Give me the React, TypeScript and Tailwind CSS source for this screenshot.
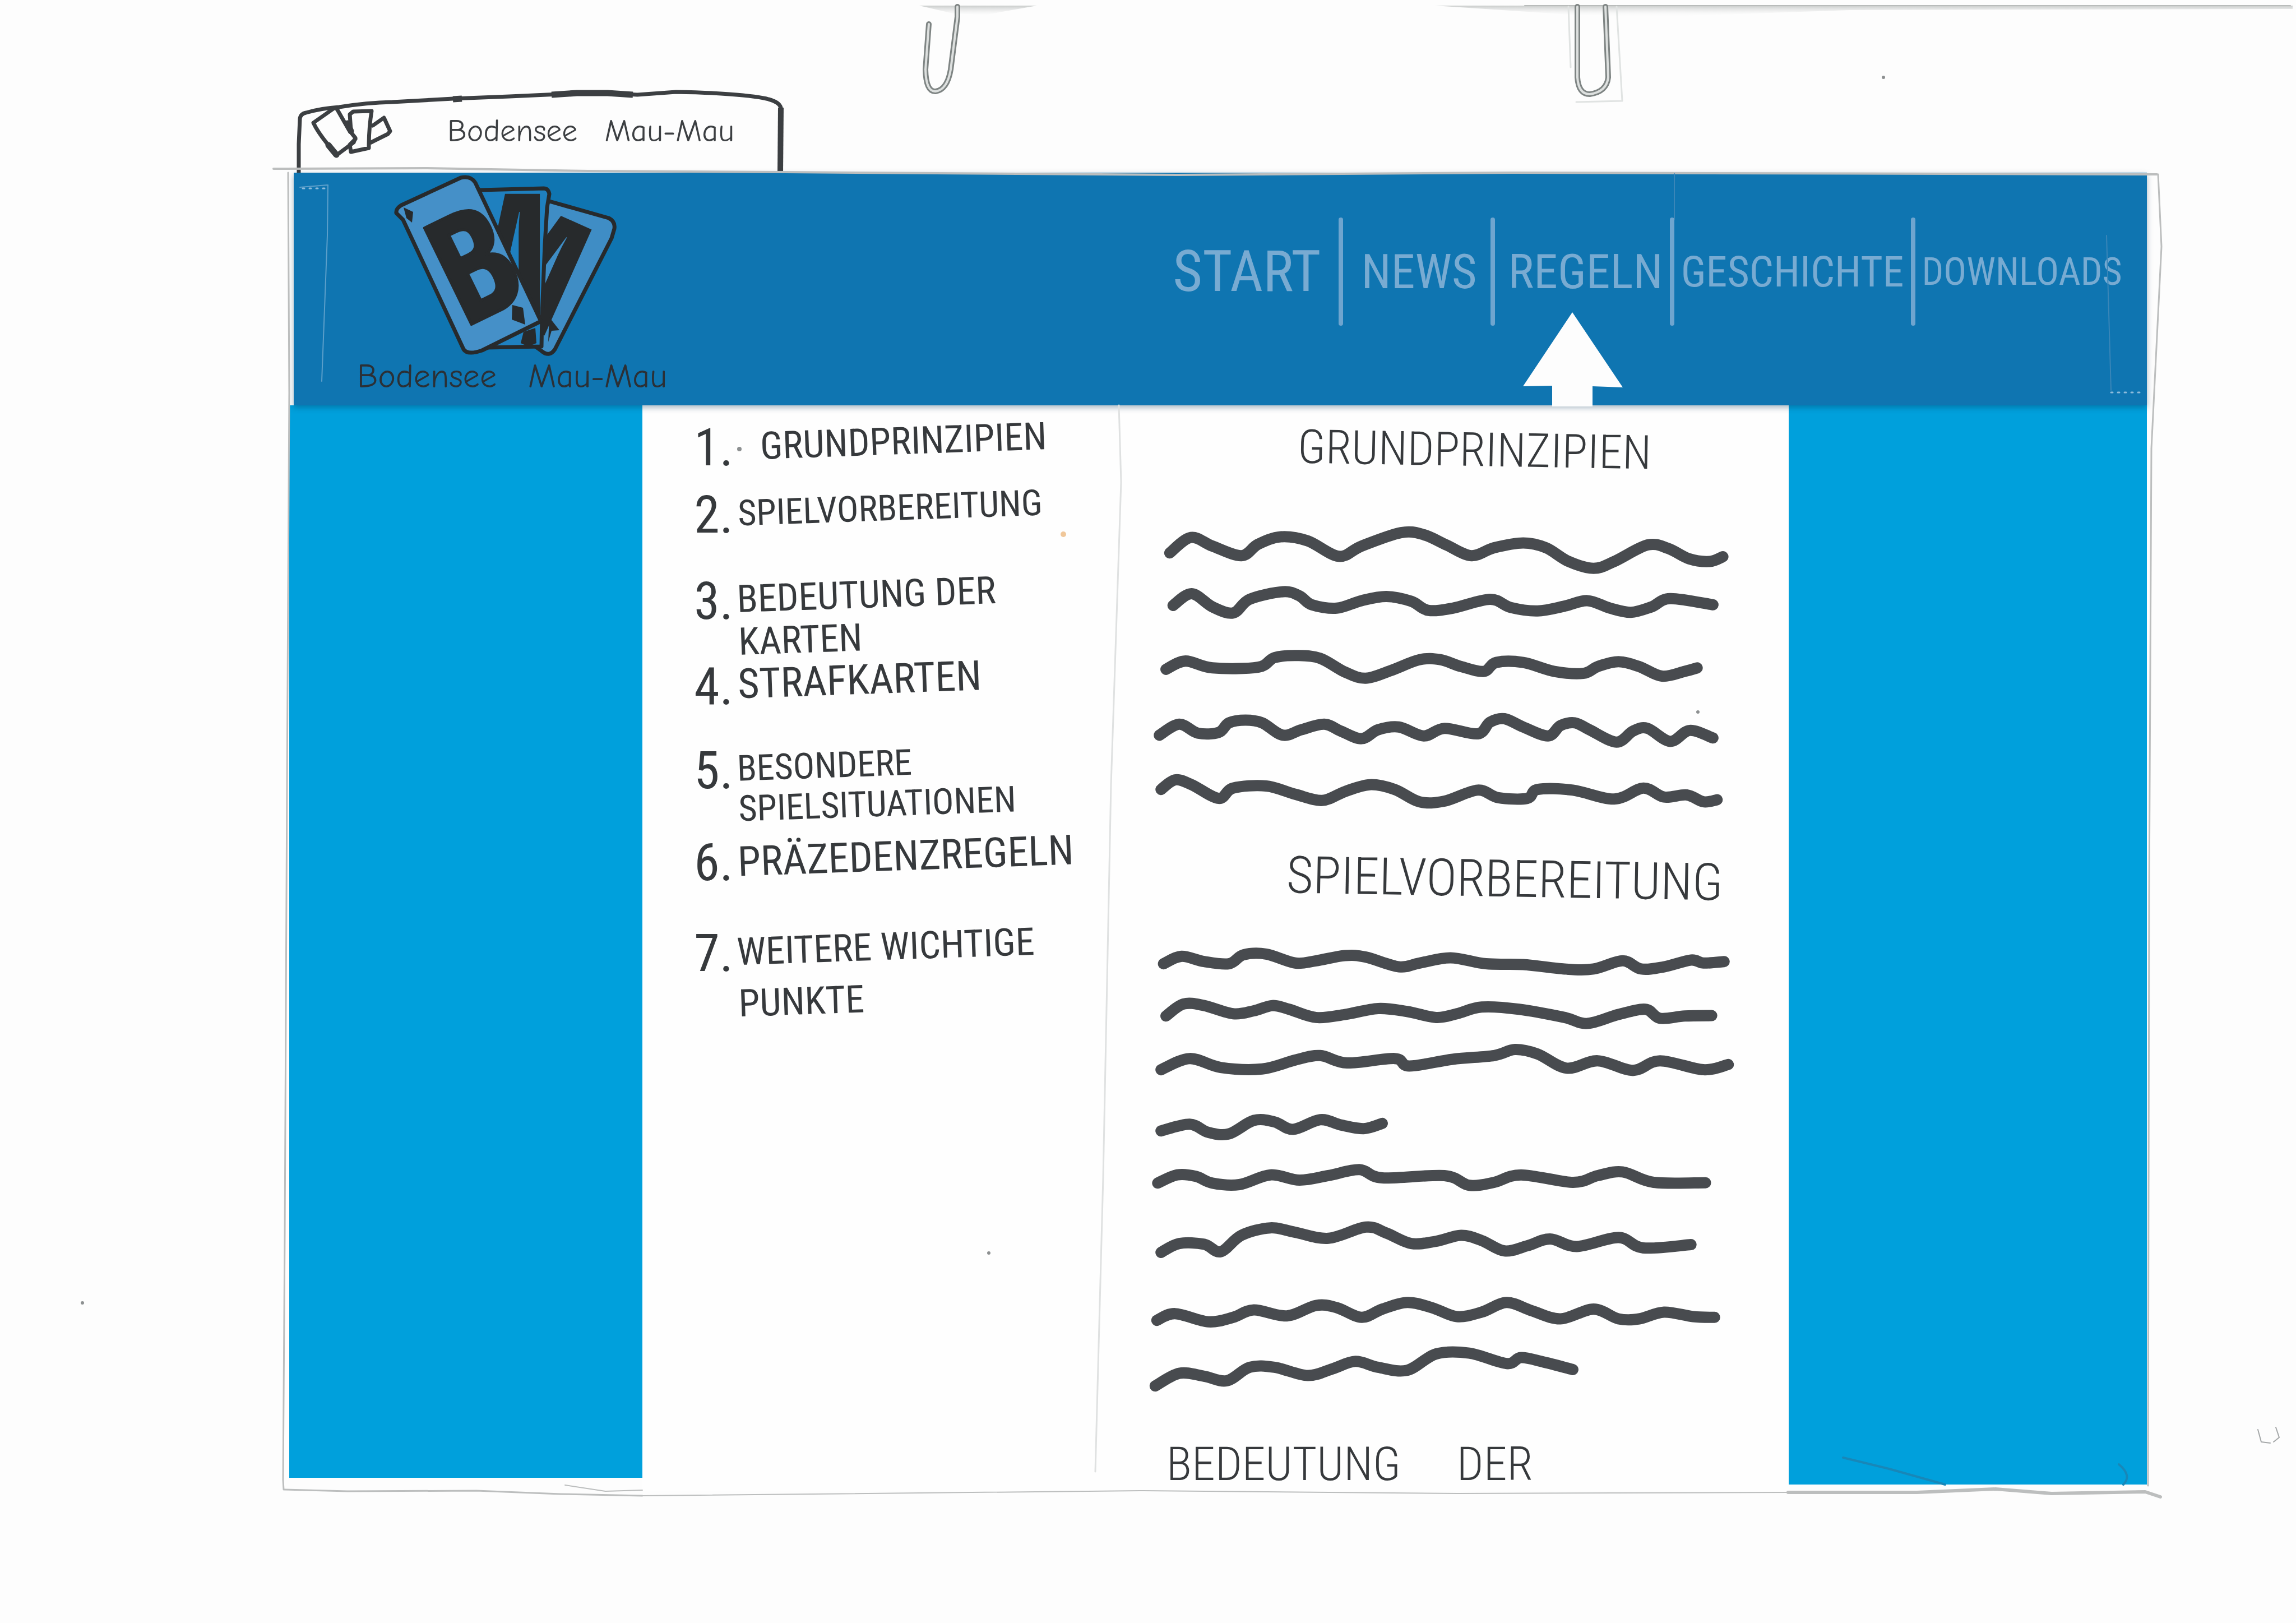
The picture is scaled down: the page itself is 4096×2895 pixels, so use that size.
import type { ReactNode } from 'react';

type Point = [number, number];

/* Smooth pen stroke through a list of points */
function stroke(points: Point[], sx: number, sy: number, ox: number, oy: number): string {
  const p = points.map(([x, y]): Point => [x * sx + ox, y * sy + oy]);
  let d = `M${p[0][0].toFixed(1)} ${p[0][1].toFixed(1)}`;
  for (let i = 0; i < p.length - 1; i++) {
    const a = p[Math.max(0, i - 1)];
    const b = p[i];
    const c = p[i + 1];
    const e = p[Math.min(p.length - 1, i + 2)];
    const c1 = [b[0] + (c[0] - a[0]) / 6, b[1] + (c[1] - a[1]) / 6];
    const c2 = [c[0] - (e[0] - b[0]) / 6, c[1] - (e[1] - b[1]) / 6];
    d += `C${c1[0].toFixed(1)} ${c1[1].toFixed(1)} ${c2[0].toFixed(1)} ${c2[1].toFixed(1)} ${c[0].toFixed(1)} ${c[1].toFixed(1)}`;
  }
  return d;
}

const basics: Point[][] = [
  [[97,455],[148,410],[200,435],[270,463],[310,430],[365,408],[430,420],[505,465],[560,435],[655,396],[710,402],[765,432],[825,463],[880,440],[950,426],[1005,440],[1060,480],[1120,500],[1170,480],[1250,432],[1300,442],[1350,472],[1400,480],[1432,466]],
  [[105,608],[150,574],[200,612],[250,630],[290,590],[370,568],[410,580],[440,606],[500,616],[560,594],[620,582],[680,596],[720,622],[780,616],[870,590],[920,614],[985,624],[1050,610],[1105,594],[1160,616],[1210,628],[1260,612],[1305,588],[1408,606]],
  [[88,794],[135,770],[200,790],[310,788],[350,760],[405,754],[460,762],[520,802],[570,820],[630,798],[700,766],[750,766],[800,786],[855,800],[885,774],[950,774],[1025,800],[1095,806],[1130,786],[1180,772],[1230,786],[1285,814],[1340,800],[1370,790]],
  [[72,986],[120,954],[165,980],[215,978],[240,950],[280,942],[320,950],[370,986],[415,970],[470,954],[510,974],[560,996],[600,970],[650,962],[710,988],[760,966],[840,982],[870,948],[905,938],[950,962],[1010,988],[1040,958],[1075,950],[1110,970],[1175,1006],[1215,974],[1250,966],[1305,1004],[1352,972],[1408,994]],
  [[76,1144],[110,1116],[150,1130],[215,1170],[250,1140],[330,1134],[400,1158],[465,1176],[520,1150],[580,1130],[640,1144],[700,1180],[760,1178],[840,1146],[890,1168],[960,1170],[985,1144],[1070,1146],[1170,1172],[1240,1140],[1290,1166],[1345,1160],[1385,1180],[1418,1174]],
];

const preparation: Point[][] = [
  [[82,104],[125,84],[180,98],[240,104],[275,80],[330,78],[400,102],[450,96],[520,82],[570,86],[650,112],[700,102],[775,88],[860,104],[950,106],[1050,118],[1120,118],[1190,96],[1235,118],[1290,112],[1355,94],[1385,102],[1435,98]],
  [[88,244],[130,212],[180,216],[250,238],[300,230],[345,216],[385,226],[450,248],[520,240],[600,224],[670,232],[740,248],[790,238],[850,220],[940,226],[1050,248],[1105,264],[1180,240],[1245,226],[1280,250],[1340,244],[1405,243]],
  [[76,388],[145,358],[220,382],[320,386],[400,362],[460,350],[525,370],[640,358],[675,378],[780,360],[880,350],[930,334],[985,346],[1055,384],[1130,364],[1215,390],[1280,364],[1385,388],[1445,374]],
  [[76,552],[145,534],[190,556],[240,560],[300,524],[350,528],[395,548],[460,522],[510,536],[565,546],[610,532]],
  [[68,692],[115,670],[160,674],[200,692],[265,696],[340,670],[410,684],[480,672],[555,656],[610,678],[760,672],[820,698],[880,690],[945,670],[1070,690],[1130,672],[1190,662],[1265,690],[1390,691]],
  [[76,878],[120,854],[180,856],[220,876],[270,832],[340,812],[400,824],[480,840],[570,810],[620,826],[680,854],[740,848],[800,832],[850,846],[905,874],[960,860],[1015,842],[1080,862],[1180,838],[1240,866],[1355,857]],
  [[66,1060],[110,1042],[190,1064],[250,1052],[300,1032],[380,1048],[450,1020],[500,1026],[560,1052],[610,1030],[670,1012],[730,1026],[790,1050],[850,1038],[910,1012],[970,1034],[1040,1056],[1120,1030],[1180,1056],[1230,1056],[1290,1038],[1360,1050],[1412,1052]],
  [[62,1236],[120,1202],[180,1210],[235,1222],[290,1186],[350,1186],[430,1208],[490,1190],[545,1170],[600,1186],[670,1194],[740,1150],[820,1148],[910,1176],[945,1160],[1000,1172],[1070,1192]],
];

function Scribble({ lines, height, sy, oy, className }: { lines: Point[][]; height: number; sy: number; oy: number; className: string }) {
  return (
    <svg viewBox={`0 0 1194 ${height}`} className={`block w-full ${className}`} fill="none" stroke="#484b4f" strokeWidth="20" strokeLinecap="round" strokeLinejoin="round" aria-hidden="true">
      {lines.map((l, i) => (
        <path key={i} d={stroke(l, 0.7377, sy, 20, oy)} />
      ))}
    </svg>
  );
}

function TabIcon() {
  return (
    <svg viewBox="40 36 150 100" className="h-[100px] w-[150px]" fill="none" stroke="#3c3f42" strokeWidth="7" strokeLinejoin="round" strokeLinecap="round" aria-hidden="true">
      <path d="M47 71L84 45Q87 44 90 48L110 83L122 98L119 106L88 129L74 111Q55 88 47 71Z" />
      <path d="M74 111L88 128M108 72L114 86" strokeWidth="11" />
      <path d="M114 84L112 56L118 51L151 50Q146 80 146 116L114 123L112 110L122 100" />
      <path d="M153 76L173 62L184 86L180 91L150 106" />
    </svg>
  );
}

function TabOutline() {
  return (
    <svg viewBox="0 0 880 148" preserveAspectRatio="none" className="absolute inset-0 h-full w-full" fill="none" stroke="#3c3f42" strokeWidth="7" strokeLinejoin="round" aria-hidden="true">
      <path d="M9 148L9 97L11 52Q12 43 22 41Q50 33 81 31Q130 23 176 22L284 16L385 12L473 8L537 5L613 9L682 4Q740 5 777 8Q830 12 847 17Q866 22 869 32L869 148" />
      <path d="M284 17L300 16M460 9L505 6L560 6L605 9" strokeWidth="11" />
      <path d="M869 32L868 148" strokeWidth="10" />
    </svg>
  );
}

function CardLogo() {
  const front = 'M13 82Q12 74 22 68L128 19Q146 15 154 28L163 47L271 275L166 327Q140 336 133 325L25 94Z';
  const middle = 'M163 41L276 38Q284 38 286 48L282 72L278 138L273 264L272 320L173 322L120 250L150 60Z';
  const back = 'M286 61L392 91Q404 97 402 110L397 127L296 325Q286 340 272 328L258 318L276 70Z';
  return (
    <svg viewBox="0 10 420 330" className="h-[330px] w-[420px]" stroke="#272a2c" strokeWidth="7" strokeLinejoin="round" strokeLinecap="round" role="img" aria-label="BMM">
      <defs>
        <clipPath id="middle-card"><path d={middle} /></clipPath>
        <clipPath id="back-card"><path d={back} /></clipPath>
      </defs>
      <path d={back} fill="#3f8dc5" />
      <g clipPath="url(#back-card)" fill="#272a2c" stroke="none" fontFamily="'Open Sans Condensed', 'Open Sans', sans-serif" fontWeight="700" fontSize="290">
        <text transform="translate(294 308) rotate(24)" textAnchor="end">M</text>
      </g>
      <path d="M286 268L304 291L290 292L284 312Z" fill="#272a2c" stroke="none" />
      <path d={middle} fill="#1f80bf" />
      <g clipPath="url(#middle-card)" fill="#272a2c" stroke="none" fontFamily="'Open Sans Condensed', 'Open Sans', sans-serif" fontWeight="700" fontSize="300">
        <text x="288" y="262" textAnchor="end">M</text>
      </g>
      <path d="M235 314L240 294L261 287L263 314Q248 322 235 314Z" fill="#272a2c" stroke="none" />
      <path d={front} fill="#4590c8" />
      <g fill="#272a2c" stroke="#272a2c" strokeWidth="5" fontFamily="'Open Sans Condensed', 'Open Sans', sans-serif" fontWeight="700" fontSize="268">
        <text transform="translate(132 288) rotate(-26)">B</text>
      </g>
      <path d="M220 246L239 251L243 281L219 272Z" fill="#272a2c" stroke="none" />
      <path d="M26 72L43 80L41 99L31 91Z" fill="#272a2c" stroke="none" />
    </svg>
  );
}

function Arrow() {
  return (
    <svg viewBox="0 0 178 168" className="absolute top-[169px] left-[26px] h-[168px] w-[178px]" fill="#fdfdfd" aria-hidden="true">
      <path d="M88 0L178 134L124 132V168H52V131L0 132Z" />
    </svg>
  );
}

/* Paper clips, pencil frame and paper marks lying over the sheet */
function PaperMarks() {
  return (
    <svg viewBox="0 0 4096 2895" preserveAspectRatio="none" className="pointer-events-none absolute inset-0 h-full w-full" fill="none" strokeLinecap="round" strokeLinejoin="round" aria-hidden="true">
      <defs>
        <linearGradient id="fade" x1="0" y1="0" x2="0" y2="1">
          <stop offset="0" stopColor="#c9cccb" />
          <stop offset="1" stopColor="#fdfdfd" stopOpacity="0" />
        </linearGradient>
      </defs>
      <path d="M1640 10H1850L1760 26L1700 24Z M2560 10H4090V16L3300 18L2950 30L2800 26Z" fill="url(#fade)" />
      <path d="M2720 10H4086" stroke="#b9bcbb" strokeWidth="2" />
      <path d="M2798 12L2802 120M2884 12L2894 180L2812 182" stroke="#e0e3e2" strokeWidth="3" />
      <g stroke="#7e8483" strokeWidth="10">
        <path d="M1657 43L1651 124Q1652 164 1669 163Q1690 160 1696 124L1708 30L1708 12" />
        <path d="M2814 12V138Q2816 168 2836 168Q2866 164 2869 138L2864 12" />
      </g>
      <g stroke="#dde0df" strokeWidth="4">
        <path d="M1657 43L1651 124Q1652 164 1669 163Q1690 160 1696 124L1708 30L1708 12" />
        <path d="M2814 12V138Q2816 168 2836 168Q2866 164 2869 138L2864 12" />
      </g>
      <g stroke="#bcbebe" strokeWidth="4">
        <path d="M488 301L760 300L1050 305L1400 307L2100 312L2700 308L3848 311" />
        <path d="M514 308L516 700L512 1400L508 2200L505 2640L506 2657L620 2660L850 2659L1000 2665L1146 2668" strokeWidth="3" />
        <path d="M1008 2649L1080 2660L1146 2658M1146 2668L2040 2659L2600 2664L3190 2662" strokeWidth="2" />
        <path d="M3190 2662L3420 2662L3560 2656L3660 2664L3827 2661L3854 2670" strokeWidth="6" />
        <path d="M3850 311L3856 440L3838 800L3834 1600L3832 2650" strokeWidth="3" />
      </g>
      <path d="M1996 723L2000 860L1982 1400L1968 2100L1954 2625" stroke="#dfe1e1" strokeWidth="3" />
      <path d="M585 330L584 420L574 680M535 334L584 330" stroke="#5c9fca" strokeWidth="2" />
      <path d="M540 336H584M3766 700H3822" stroke="#8dbbdb" strokeWidth="3" strokeDasharray="3 9" />
      <path d="M3758 420L3766 696M2987 310V392" stroke="#3a86b8" strokeWidth="2" />
      <path d="M3288 2600L3370 2620L3470 2648M3780 2612Q3804 2632 3788 2648" stroke="#1887b8" strokeWidth="4" />
      <path d="M4028 2550L4034 2572L4050 2574M4060 2546L4066 2564L4056 2572" stroke="#a4a7a8" strokeWidth="2" />
      <g fill="#8d9091">
        <circle cx="147" cy="2324" r="3" />
        <circle cx="1764" cy="2235" r="3" />
        <circle cx="3360" cy="138" r="3" />
        <circle cx="3029" cy="1270" r="3" />
        <circle cx="1319" cy="801" r="4" />
      </g>
      <circle cx="1897" cy="953" r="5" fill="#f0c79a" />
    </svg>
  );
}

type Entry = { n: string; lines: string[]; row: string; label: string };

const entries: Entry[] = [
  { n: '1.', lines: ['GRUNDPRINZIPIEN'], row: 'leading-[80px]', label: 'ml-10 text-[68px]' },
  { n: '2.', lines: ['SPIELVORBEREITUNG'], row: 'mt-10 leading-[80px]', label: 'text-[64px]' },
  { n: '3.', lines: ['BEDEUTUNG DER', 'KARTEN'], row: 'mt-[76px] leading-[76px]', label: 'text-[68px]' },
  { n: '4.', lines: ['STRAFKARTEN'], row: 'leading-[76px]', label: 'text-[74px]' },
  { n: '5.', lines: ['BESONDERE', 'SPIELSITUATIONEN'], row: 'mt-[76px] leading-[72px]', label: 'text-[64px]' },
  { n: '6.', lines: ['PRÄZEDENZREGELN'], row: 'mt-4 leading-[80px]', label: 'text-[74px]' },
  { n: '7.', lines: ['WEITERE WICHTIGE', 'PUNKTE'], row: 'mt-[76px] leading-[92px]', label: 'text-[68px]' },
];

function Contents() {
  return (
    <nav aria-label="Inhalt" className="pt-6 pl-[92px] whitespace-nowrap text-[#36393c]">
      <ol>
        {entries.map((e) => (
          <li key={e.n} className={`flex items-start ${e.row}`}>
            <span className="mt-3 -mb-3 w-[78px] shrink-0 text-[92px]">{e.n}</span>
            <a href="#" className={`block -rotate-2 ${e.label}`}>
              {e.lines.map((l) => (
                <span key={l} className="block">{l}</span>
              ))}
            </a>
          </li>
        ))}
      </ol>
    </nav>
  );
}

function Bar({ className }: { className: string }) {
  return <span aria-hidden="true" className={`h-[193px] w-[8px] shrink-0 rounded-full bg-[#6fa5cf] ${className}`} />;
}

function NavLink({ children, className }: { children: ReactNode; className: string }) {
  return <a href="#" className={className}>{children}</a>;
}

export default function App() {
  return (
    <div className="relative min-h-screen w-full overflow-hidden bg-[#fdfdfd] pt-[160px] font-['Roboto_Condensed',Roboto,sans-serif]">
      <div className="mr-[6.5%] ml-[12.6%]">
        <div className="relative ml-2 flex h-[148px] w-[880px] items-center">
          <TabOutline />
          <div className="relative ml-7 flex items-center gap-[96px]">
            <TabIcon />
            <p className="flex gap-12 font-['Comic_Neue',sans-serif] text-[56px] whitespace-nowrap text-[#3c3f42]">
              <span>Bodensee</span> <span>Mau-Mau</span>
            </p>
          </div>
        </div>

        <header className="relative z-10 ml-2 flex h-[415px] items-start justify-between bg-[#0f75b1] shadow-[0_4px_10px_rgba(0,50,80,0.35)]">
          <div className="flex flex-col items-start">
            <div className="ml-[170px]"><CardLogo /></div>
            <p className="ml-[113px] flex gap-14 font-['Comic_Neue',sans-serif] text-[60px] leading-[68px] whitespace-nowrap text-[#2b3036]">
              <span>Bodensee</span> <span>Mau-Mau</span>
            </p>
          </div>
          <nav aria-label="Hauptmenü" className="mt-20 mr-11 flex items-center whitespace-nowrap text-[#78abd2]">
            <NavLink className="text-[102px]">START</NavLink>
            <Bar className="mx-8" />
            <NavLink className="text-[86px]">NEWS</NavLink>
            <Bar className="mx-6" />
            <div className="relative flex h-[193px] items-center">
              <NavLink className="text-[86px]">REGELN</NavLink>
              <Arrow />
            </div>
            <Bar className="mx-3" />
            <NavLink className="text-[76px]">GESCHICHTE</NavLink>
            <Bar className="mx-3" />
            <NavLink className="text-[68px]">DOWNLOADS</NavLink>
          </nav>
        </header>

        <div className="grid grid-cols-[629fr_2041fr_637fr]">
          <aside className="mb-6 bg-[#00a0dc]" />
          <main className="grid grid-cols-[847fr_1194fr] bg-[#fefefe]">
            <Contents />
            <article className="pt-8 font-light whitespace-nowrap text-[#36393c]">
              <h2 className="ml-80 w-fit rotate-1 text-[84px] leading-[96px]">GRUNDPRINZIPIEN</h2>
              <Scribble lines={basics} height={550} sy={0.6112} oy={-209} className="mt-[66px]" />
              <h2 className="mt-[52px] ml-75 w-fit rotate-1 text-[92px] leading-[96px]">SPIELVORBEREITUNG</h2>
              <Scribble lines={preparation} height={830} sy={0.6639} oy={-18} className="mt-[52px]" />
              <h2 className="mt-16 ml-[86px] flex gap-[100px] text-[84px] leading-[96px]">
                <span>BEDEUTUNG</span> <span>DER</span>
              </h2>
            </article>
          </main>
          <aside className="mb-3 bg-[#00a0dc]" />
        </div>
      </div>
      <div className="pointer-events-none absolute inset-0 z-20"><PaperMarks /></div>
    </div>
  );
}
